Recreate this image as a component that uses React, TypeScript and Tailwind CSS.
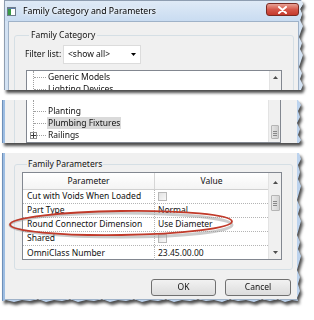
import React from "react";

function TitleIcon() {
  return (
    <svg width="9" height="9" viewBox="0 0 9 9" className="shrink-0">
      <rect x="0.5" y="0.5" width="8" height="8" fill="#ffffff" stroke="#6f7d8c" />
      <rect x="1" y="2" width="3" height="6" fill="#3a9a46" />
      <rect x="1" y="1" width="7" height="1" fill="#5d7fa8" />
    </svg>
  );
}

function CloseButton() {
  return (
    <div className="w-[33px] h-[13px] rounded-[3px] border border-[#7a2a22] bg-gradient-to-b from-[#e6a095] via-[#d5574a] to-[#c4392c] flex items-center justify-center">
      <svg width="9" height="8" viewBox="0 0 9 8">
        <path d="M1 1 L8 7 M8 1 L1 7" stroke="#ffffff" strokeWidth="2" strokeLinecap="round" />
      </svg>
    </div>
  );
}

function UpArrow() {
  return (
    <svg width="5" height="3" viewBox="0 0 5 3">
      <path d="M0 3 L2.5 0 L5 3 Z" fill="#4d4d4d" />
    </svg>
  );
}

function DownArrow() {
  return (
    <svg width="5" height="3" viewBox="0 0 5 3">
      <path d="M0 0 L2.5 3 L5 0 Z" fill="#4d4d4d" />
    </svg>
  );
}

function TreeRow({ label, selected, plus }: { label: string; selected?: boolean; plus?: boolean }) {
  return (
    <div className="h-[12px] flex items-center relative">
      <div className="w-[7px] shrink-0" />
      {plus ? (
        <div className="w-[7px] h-[7px] border border-[#919191] bg-white flex items-center justify-center shrink-0 -ml-[4px] z-10">
          <svg width="5" height="5" viewBox="0 0 5 5">
            <path d="M0 2.5 H5 M2.5 0 V5" stroke="#3a3a3a" strokeWidth="1" />
          </svg>
        </div>
      ) : null}
      <div className={`${plus ? "w-[9px]" : "w-[12px]"} border-t border-dotted border-[#a0a0a0] shrink-0`} />
      <span className={`ml-[1px] px-[1px] leading-[12px] whitespace-nowrap ${selected ? "bg-[#dadada]" : ""}`}>
        {label}
      </span>
    </div>
  );
}

export default function App() {
  return (
    <div className="w-[314px] h-[320px] bg-white overflow-hidden font-['Noto_Sans',sans-serif] text-[8.5px] text-[#111] flex flex-col">
      {/* Panel 1 */}
      <div className="ml-[4px] w-[300px] h-[90px] shrink-0 drop-shadow-[2px_3px_1.5px_rgba(0,0,0,0.7)]">
        <div className="w-full h-full bg-[#d3e2f3] border-l border-t border-[#8e9db0] flex flex-col [clip-path:polygon(0_0,297px_0,299px_4px,296px_9px,298px_14px,296px_20px,299px_26px,297px_31px,295px_37px,298px_43px,296px_49px,299px_55px,297px_61px,295px_67px,298px_73px,296px_79px,299px_85px,297px_90px,0_90px)]">
          <div className="h-[20px] shrink-0 flex items-center pl-[2px] pr-[5px] bg-gradient-to-b from-[#dfeaf6] to-[#c9dcf1]">
            <TitleIcon />
            <span className="ml-[7px] mt-[1px] text-[8.7px] text-black whitespace-nowrap [text-shadow:0_0_6px_#ffffff,0_0_3px_#ffffff]">
              Family Category and Parameters
            </span>
            <div className="ml-auto -mt-[3px]">
              <CloseButton />
            </div>
          </div>
          <div className="flex-1 ml-[3px] mr-[5px] border-l border-t border-r border-[#9fb2c8] bg-[#f0f0f0] pl-[5px] pr-[4px] pt-[7px] overflow-hidden">
            <fieldset className="border border-[#d5dfe5] rounded-[3px] pl-[10px] pr-[11px] h-[120px]">
              <legend className="ml-[4px] px-[2px] leading-[12px] whitespace-nowrap">Family Category</legend>
              <div className="flex items-center mt-[4px] h-[19px]">
                <span className="w-[38px] shrink-0 whitespace-nowrap">Filter list:</span>
                <div className="w-[78px] h-[19px] bg-white border border-[#dcdcdc] flex items-center pl-[4px] pr-[4px]">
                  <span className="whitespace-nowrap">&lt;show all&gt;</span>
                  <svg className="ml-auto" width="5" height="3" viewBox="0 0 5 3">
                    <path d="M0 0 L2.5 3 L5 0 Z" fill="#000" />
                  </svg>
                </div>
              </div>
              <div className="mt-[6px] ml-[1px] h-[60px] border border-[#828790] bg-white flex">
                <div className="flex-1 relative">
                  <div className="absolute left-[6px] top-0 h-full border-l border-dotted border-[#a0a0a0]" />
                  <TreeRow label="Generic Models" />
                  <TreeRow label="Lighting Devices" />
                </div>
                <div className="w-[12px] border-l border-[#e3e3e3] bg-[#f0f0f0] flex flex-col items-center pt-[5px]">
                  <UpArrow />
                </div>
              </div>
            </fieldset>
          </div>
        </div>
      </div>

      {/* Panel 2 */}
      <div className="mt-[10px] ml-[2px] w-[300px] h-[43px] shrink-0 drop-shadow-[2px_3px_1.5px_rgba(0,0,0,0.7)]">
        <div className="w-full h-full bg-[#bcd3ee] flex [clip-path:polygon(0_0,296px_0,299px_5px,296px_11px,298px_17px,295px_23px,298px_29px,296px_35px,299px_40px,297px_43px,0_43px)]">
          <div className="w-[3px] bg-[#9dbde2] border-l border-[#6e8fb8] shrink-0" />
          <div className="flex-1 mr-[5px] bg-[#f0f0f0] flex pl-[9px]">
            <div className="w-[1px] bg-[#d5dfe5] shrink-0" />
            <div className="ml-[11px] flex-1 flex border-l border-r border-b border-[#828790] bg-white mr-[16px]">
              <div className="flex-1 relative pt-[5px]">
                <div className="absolute left-[6px] top-0 h-[34px] border-l border-dotted border-[#a0a0a0]" />
                <TreeRow label="Planting" />
                <TreeRow label="Plumbing Fixtures" selected />
                <TreeRow label="Railings" plus />
              </div>
              <div className="w-[12px] border-l border-[#e3e3e3] bg-[#f0f0f0] flex flex-col items-center justify-end pb-[3px]">
                <div className="w-[8px] h-[14px] bg-gradient-to-r from-[#e4e4e4] to-[#cfcfcf] border border-[#b5b5b5] rounded-[1px] flex flex-col items-center justify-end pb-[2px] gap-[1px]">
                  <div className="w-[4px] h-[1px] bg-[#888]" />
                  <div className="w-[4px] h-[1px] bg-[#888]" />
                  <div className="w-[4px] h-[1px] bg-[#888]" />
                </div>
              </div>
            </div>
          </div>
        </div>
      </div>

      {/* Panel 3 */}
      <div className="mt-[10px] ml-[2px] w-[300px] h-[152px] shrink-0 drop-shadow-[2px_3px_1.5px_rgba(0,0,0,0.7)] relative">
        <div className="w-full h-full bg-[#bcd3ee] flex [clip-path:polygon(0_0,297px_0,299px_6px,296px_12px,298px_19px,296px_26px,299px_33px,297px_40px,295px_47px,298px_54px,296px_61px,299px_68px,297px_75px,295px_82px,298px_89px,296px_96px,299px_103px,297px_110px,295px_117px,298px_124px,296px_131px,298px_138px,295px_145px,296px_148px,290px_147px,283px_149px,276px_146px,268px_148px,260px_146px,252px_149px,244px_147px,236px_148px,228px_146px,220px_149px,212px_147px,204px_148px,196px_146px,188px_148px,180px_147px,172px_149px,164px_146px,156px_148px,148px_147px,140px_149px,132px_146px,124px_148px,116px_147px,108px_149px,100px_146px,92px_148px,84px_147px,76px_149px,68px_146px,60px_148px,52px_147px,44px_149px,36px_146px,28px_148px,20px_147px,12px_149px,4px_147px,0_148px)]">
          <div className="w-[3px] bg-[#9dbde2] border-l border-[#6e8fb8] shrink-0" />
          <div className="flex-1 mr-[5px] mb-[5px] bg-[#f0f0f0] border-b border-[#9fb2c8] pl-[9px] pr-[4px] pt-[5px] flex flex-col">
            <fieldset className="border border-[#d5dfe5] rounded-[3px] pl-[7px] pr-[10px] pb-[9px]">
              <legend className="ml-[5px] px-[1px] leading-[12px] whitespace-nowrap">Family Parameters</legend>
              <div className="mt-[2px] h-[88px] border border-[#828790] bg-white flex">
                <div className="flex-1 flex flex-col">
                  <div className="h-[17px] shrink-0 flex border-b border-[#d0d0d0] bg-gradient-to-b from-white to-[#f4f4f4]">
                    <div className="w-[132px] flex items-center justify-center border-r border-[#d6d6d6]">Parameter</div>
                    <div className="flex-1 flex items-center justify-center">Value</div>
                  </div>
                  {[
                    ["Cut with Voids When Loaded", "cb"],
                    ["Part Type", "Normal"],
                    ["Round Connector Dimension", "Use Diameter"],
                    ["Shared", "cb"],
                    ["OmniClass Number", "23.45.00.00"],
                  ].map(([p, v], i) => (
                    <div
                      key={p}
                      className={`h-[14px] shrink-0 flex ${i < 4 ? "border-b border-dotted border-[#b4b4b4]" : ""}`}
                    >
                      <div className="w-[132px] pl-[4px] flex items-center border-r border-dotted border-[#b4b4b4] whitespace-nowrap">
                        {p}
                      </div>
                      <div className="flex-1 pl-[3px] flex items-center whitespace-nowrap">
                        {v === "cb" ? (
                          <div className="w-[9px] h-[9px] border border-[#b8b8b8] bg-gradient-to-br from-[#e2e2e2] to-[#f8f8f8]" />
                        ) : (
                          v
                        )}
                      </div>
                    </div>
                  ))}
                </div>
                <div className="w-[13px] border-l border-[#e3e3e3] bg-[#f0f0f0] flex flex-col items-center pt-[8px] pb-[5px]">
                  <UpArrow />
                  <div className="mt-[11px] w-[9px] h-[16px] bg-gradient-to-r from-[#eaeaea] to-[#d3d3d3] border border-[#b5b5b5] rounded-[1px] flex flex-col items-center justify-center gap-[1px]">
                    <div className="w-[4px] h-[1px] bg-[#888]" />
                    <div className="w-[4px] h-[1px] bg-[#888]" />
                    <div className="w-[4px] h-[1px] bg-[#888]" />
                  </div>
                  <div className="mt-auto">
                    <DownArrow />
                  </div>
                </div>
              </div>
            </fieldset>
            <div className="mt-[9px] flex justify-end gap-[9px] pr-[2px]">
              <button className="w-[65px] h-[17px] rounded-[3px] border border-[#707070] bg-gradient-to-b from-[#f2f2f2] to-[#dcdcdc] text-[8.5px]">
                OK
              </button>
              <button className="w-[66px] h-[17px] rounded-[3px] border border-[#707070] bg-gradient-to-b from-[#f2f2f2] to-[#dcdcdc] text-[8.5px]">
                Cancel
              </button>
            </div>
          </div>
        </div>
        <svg className="absolute left-[4px] top-[55px]" width="232" height="32" viewBox="0 0 232 32">
          <ellipse cx="115" cy="17" rx="111" ry="12" fill="none" stroke="#9a9a9a" strokeOpacity="0.5" strokeWidth="3" />
          <ellipse cx="115" cy="15" rx="111" ry="12" fill="none" stroke="#c13a2a" strokeWidth="1.8" transform="rotate(-0.8 115 15)" />
        </svg>
      </div>
    </div>
  );
}
